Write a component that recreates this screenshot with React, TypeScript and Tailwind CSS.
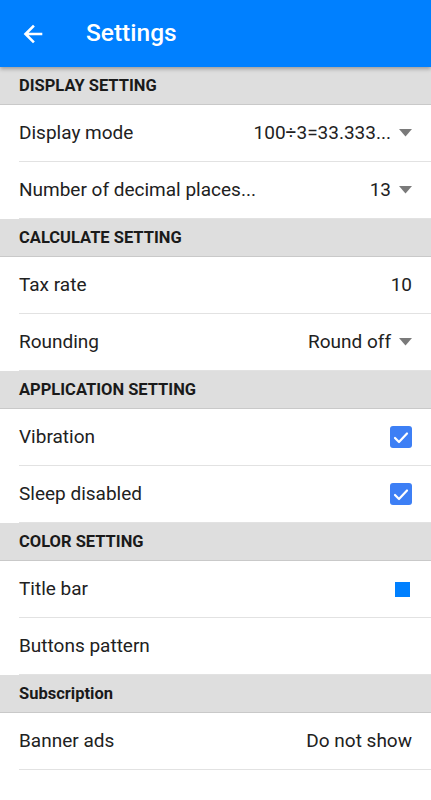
import React from "react";

const Caret = () => (
  <svg width="13" height="8" viewBox="0 0 13 8" className="ml-[8px]">
    <path d="M0 0 L13 0 L6.5 7.5 Z" fill="#7a7a7a" />
  </svg>
);

const Check = () => (
  <div className="w-[22px] h-[22px] rounded-[3px] bg-[#3d7ff5] flex items-center justify-center">
    <svg width="16" height="13" viewBox="0 0 16 13">
      <path d="M2 7 L6 11 L14 2.5" fill="none" stroke="#fff" strokeWidth="2.2" strokeLinecap="round" strokeLinejoin="round" />
    </svg>
  </div>
);

const Section = ({ title }: { title: string }) => (
  <div className="h-[38px] bg-[#dedede] border-b border-[#c9c9c9] flex items-center px-[19px] pt-[1px]">
    <span className="text-[16.5px] font-bold text-[#1a1a1a]">{title}</span>
  </div>
);

const Row = ({ label, right }: { label: string; right?: React.ReactNode }) => (
  <div className="h-[57px] pl-[19px]">
    <div className="h-full border-b border-[#e2e2e2] flex items-center justify-between pr-[19px]">
      <span className="text-[19px] text-[#212121]">{label}</span>
      <div className="flex items-center text-[19px] text-[#212121]">{right}</div>
    </div>
  </div>
);

export default function App() {
  return (
    <div className="w-[431px] min-h-[800px] bg-white" style={{ fontFamily: "Roboto, 'Liberation Sans', sans-serif" }}>
      <div className="h-[67px] bg-[#0080ff] flex items-center relative z-10 shadow-[0_2px_4px_rgba(0,0,0,0.3)]">
        <svg width="24" height="24" viewBox="0 0 24 24" className="ml-[21px]">
          <path d="M20 12 H5 M12 4.5 L4.5 12 L12 19.5" fill="none" stroke="#fff" strokeWidth="2.6" strokeLinecap="square" />
        </svg>
        <span className="ml-[41px] text-white text-[24.5px] font-medium">Settings</span>
      </div>
      <Section title="DISPLAY SETTING" />
      <Row label="Display mode" right={<><span>100÷3=33.333...</span><Caret /></>} />
      <Row label="Number of decimal places..." right={<><span>13</span><Caret /></>} />
      <Section title="CALCULATE SETTING" />
      <Row label="Tax rate" right={<span>10</span>} />
      <Row label="Rounding" right={<><span>Round off</span><Caret /></>} />
      <Section title="APPLICATION SETTING" />
      <Row label="Vibration" right={<Check />} />
      <Row label="Sleep disabled" right={<Check />} />
      <Section title="COLOR SETTING" />
      <Row label="Title bar" right={<div className="w-[15px] h-[15px] bg-[#0080ff] mr-[2px]" />} />
      <Row label="Buttons pattern" />
      <Section title="Subscription" />
      <Row label="Banner ads" right={<span>Do not show</span>} />
    </div>
  );
}
